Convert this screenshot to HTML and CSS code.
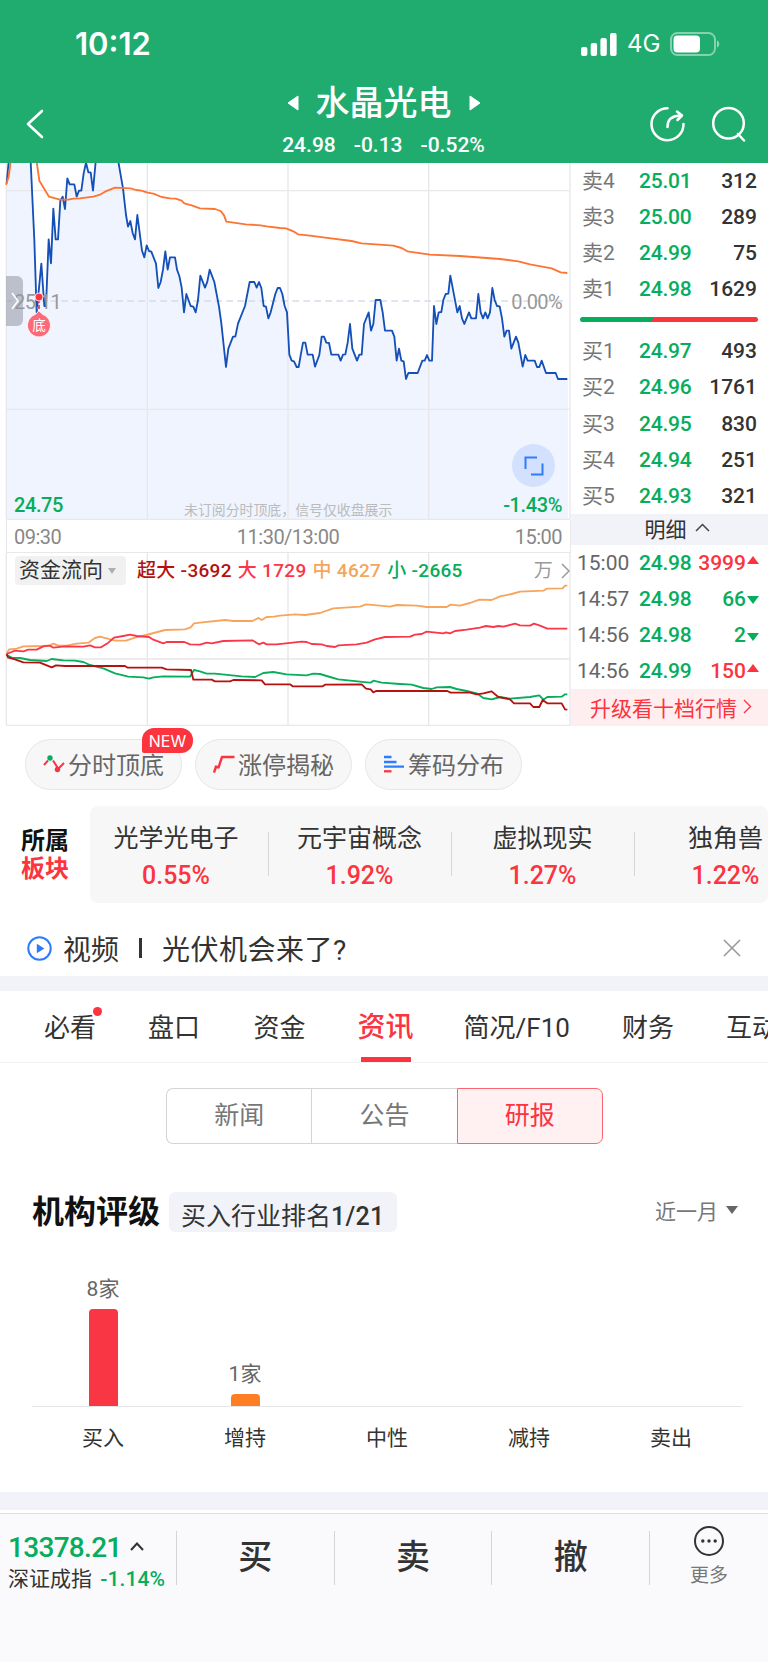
FILE: index.html
```html
<!DOCTYPE html>
<html lang="zh-CN">
<head>
    <meta charset="UTF-8">
    <meta name="viewport" content="width=device-width, initial-scale=1.0">
    <title>水晶光电</title>
    <link rel="stylesheet" href="styles.css">
</head>
<body>
    <header class="header">
        <div class="status">
            <span class="clock">10:12</span>
            <div class="status-right">
                <svg width="37" height="23" viewBox="0 0 37 23" fill="#fff">
                    <rect x="0" y="14" width="6.4" height="9" rx="2"/>
                    <rect x="9.7" y="10" width="6.4" height="13" rx="2"/>
                    <rect x="19.4" y="5" width="6.4" height="18" rx="2"/>
                    <rect x="29" y="0" width="6.6" height="23" rx="2"/>
                </svg>
                <span class="network">4G</span>
                <svg width="50" height="24" viewBox="0 0 50 24">
                    <rect x="1" y="1" width="44" height="22" rx="6.5" fill="none" stroke="#fff" stroke-opacity=".45" stroke-width="2"/>
                    <rect x="3.5" y="3.5" width="26.5" height="17" rx="4" fill="#fff"/>
                    <path d="M47 8.5c3 1.2 3 5.800 0 7z" fill="#fff" fill-opacity=".5"/>
                </svg>
            </div>
        </div>
        <div class="nav">
            <svg class="back" width="18" height="30" viewBox="0 0 18 30" fill="none" stroke="#fff" stroke-width="2.6" stroke-linecap="round" stroke-linejoin="round">
                <path d="M16 2L2 15l14 13"/>
            </svg>
            <div class="stock">
                <div class="stock-name">
                    <svg width="12" height="16" viewBox="0 0 12 16" fill="#fff"><path d="M11 1v14L1 8z" stroke="#fff" stroke-linejoin="round"/></svg>
                    <h1>水晶光电</h1>
                    <svg width="12" height="16" viewBox="0 0 12 16" fill="#fff"><path d="M1 1v14l10-7z" stroke="#fff" stroke-linejoin="round"/></svg>
                </div>
                <div class="stock-price"><span>24.98</span><span>-0.13</span><span>-0.52%</span></div>
            </div>
            <div class="nav-icons">
                <svg width="36" height="36" viewBox="0 0 36 36" fill="none" stroke="#fff" stroke-width="2.5" stroke-linecap="round" stroke-linejoin="round">
                    <path d="M17.500 2.200A16 16 0 1 0 33.500 18"/>
                    <path d="M17.500 21c0-7 4-11 12-11.500"/>
                    <path d="M27 5.500l5 4-4.500 4.500"/>
                </svg>
                <svg width="36" height="36" viewBox="0 0 36 36" fill="none" stroke="#fff" stroke-width="2.5" stroke-linecap="round">
                    <circle cx="17.5" cy="17.3" r="15.3"/>
                    <path d="M27 28l6 6.500"/>
                </svg>
            </div>
        </div>
    </header>

    <section class="quote">
        <div class="charts">
            <div class="price-chart">
                <svg width="571" height="357" viewBox="0 0 1713 1071">
                    <g transform="translate(0 -9)" fill="none" stroke-linejoin="round">
                        <path fill="#eff4fe" d="M20 1078V62L26 5H92L103 240 110 457 124 311 133 438 138 438 146 238 153 310 160 146 167 238 174 238 181 122 188 110 195 147 202 55 209 73 223 73 230 110 237 92 244 92 251 40 258 8 265 37 272 37 279 92 287 5 355 5 369 85 378 165 384 200 391 183 398 219 405 238 412 165 426 272 433 292 440 256 447 273 454 275 468 311 475 384 482 366 489 329 496 274 503 329 510 292 525 292 531 329 538 348 545 383 552 457 559 402 572 438 580 440 587 457 594 420 601 347 615 383 622 365 629 329 643 366 657 440 664 490 678 621 685 566 699 530 706 530 714 491 735 438 749 366 763 366 770 383 777 366 784 384 791 438 798 440 805 475 812 457 826 402 833 384 840 384 847 402 854 438 861 457 868 584 875 602 882 604 890 621 896 621 902 586 909 548 916 548 923 584 938 584 945 620 958 585 965 530 972 530 979 548 987 549 994 584 1015 584 1022 602 1029 584 1036 583 1043 548 1050 492 1057 566 1071 602 1078 584 1085 584 1092 492 1106 457 1113 512 1120 492 1127 420 1141 420 1148 457 1155 512 1176 512 1183 530 1190 602 1197 566 1204 602 1211 604 1218 657 1225 639 1253 639 1267 602 1274 602 1281 585 1288 602 1296 602 1302 438 1309 492 1316 457 1324 456 1330 420 1337 402 1345 401 1351 347 1372 457 1379 438 1386 475 1393 492 1407 457 1414 475 1428 475 1435 402 1442 457 1449 475 1456 457 1463 475 1470 457 1477 384 1484 420 1491 438 1499 439 1506 475 1513 530 1520 512 1527 512 1534 566 1548 530 1555 548 1568 620 1576 585 1583 602 1604 602 1611 621 1618 621 1625 602 1638 639 1667 639 1674 657 1704 657V1078z"/>
                        <path stroke="#e8e8ea" stroke-width="4" d="M19 0V1078M442 0V1078M864 0V1078M1286 0V1078M1710 0V1078M19 92H1710M19 748H1710M19 1078H1710"/>
                        <path stroke="#d3dde8" stroke-width="5" stroke-dasharray="20 13" d="M19 423H1702"/>
                        <path stroke="#1450b8" stroke-width="5.5" d="M20 70L26 5M92 5L103 240 110 457 124 311 133 438 138 438 146 238 153 310 160 146 167 238 174 238 181 122 188 110 195 147 202 55 209 73 223 73 230 110 237 92 244 92 251 40 258 8 265 37 272 37 279 92 287 5M355 5L369 85 378 165 384 200 391 183 398 219 405 238 412 165 426 272 433 292 440 256 447 273 454 275 468 311 475 384 482 366 489 329 496 274 503 329 510 292 525 292 531 329 538 348 545 383 552 457 559 402 572 438 580 440 587 457 594 420 601 347 615 383 622 365 629 329 643 366 657 440 664 490 678 621 685 566 699 530 706 530 714 491 735 438 749 366 763 366 770 383 777 366 784 384 791 438 798 440 805 475 812 457 826 402 833 384 840 384 847 402 854 438 861 457 868 584 875 602 882 604 890 621 896 621 902 586 909 548 916 548 923 584 938 584 945 620 958 585 965 530 972 530 979 548 987 549 994 584 1015 584 1022 602 1029 584 1036 583 1043 548 1050 492 1057 566 1071 602 1078 584 1085 584 1092 492 1106 457 1113 512 1120 492 1127 420 1141 420 1148 457 1155 512 1176 512 1183 530 1190 602 1197 566 1204 602 1211 604 1218 657 1225 639 1253 639 1267 602 1274 602 1281 585 1288 602 1296 602 1302 438 1309 492 1316 457 1324 456 1330 420 1337 402 1345 401 1351 347 1372 457 1379 438 1386 475 1393 492 1407 457 1414 475 1428 475 1435 402 1442 457 1449 475 1456 457 1463 475 1470 457 1477 384 1484 420 1491 438 1499 439 1506 475 1513 530 1520 512 1527 512 1534 566 1548 530 1555 548 1568 620 1576 585 1583 602 1604 602 1611 621 1618 621 1625 602 1638 639 1667 639 1674 657 1702 657"/>
                        <path stroke="#fd7433" stroke-width="5.5" d="M18 74L26 50 32 5M110 5L118 62 147 110 180 119 205 119 220 116 240 115 280 110 300 104 315 95 345 83 392 85 408 90 424 92 443 98 460 101 485 111 510 115 527 116 545 122 553 130 575 136 600 145 645 147 662 153 672 166 679 185 737 193 782 196 800 199 840 204 858 205 880 214 894 223 930 227 970 232 1055 243 1085 250 1180 257 1205 264 1222 274 1290 284 1380 288 1500 297 1555 304 1590 313 1655 325 1682 337 1702 339"/>
                    </g>
                </svg>
                <span class="mark mark-mid-left">25.11</span>
                <span class="mark mark-mid-right">0.00%</span>
                <span class="mark mark-low-left">24.75</span>
                <span class="mark mark-low-right">-1.43%</span>
                <span class="mark-note">未订阅分时顶底，信号仅收盘展示</span>
                <div class="handle">
                    <svg width="8" height="18" viewBox="0 0 8 18" fill="none" stroke="#fff" stroke-width="1.6"><path d="M1 1l6 8-6 8"/></svg>
                </div>
                <svg class="signal" width="26" height="46" viewBox="0 0 26 46">
                    <path d="M13 8v14" stroke="#d9314c" stroke-width="1.5" stroke-dasharray="4 2"/>
                    <circle cx="13" cy="6" r="4" fill="#fb3440" stroke="#fff" stroke-width=".8"/>
                    <path d="M13 20l4 3.600A11.500 11.500 0 1 1 9 23.600z" fill="#fb6a78" stroke="#fff" stroke-width=".8"/>
                    <text x="13" y="39" text-anchor="middle" font-size="13.5" fill="#fff">底</text>
                </svg>
                <div class="expand">
                    <svg width="20" height="20" viewBox="0 0 20 20" fill="none" stroke="#2f7dfb" stroke-width="2"><path d="M1.500 13V1.500H13M18.500 7.500V18.500H7"/></svg>
                </div>
            </div>
            <div class="times"><span>09:30</span><span>11:30/13:00</span><span>15:00</span></div>
            <div class="flow-chart">
                <svg width="571" height="173" viewBox="0 0 1713 519">
                    <g transform="translate(0 -159)" fill="none" stroke-linejoin="round">
                        <path stroke="#e8e8ea" stroke-width="4" d="M19 150V677M442 150V677M864 150V677M1286 150V677M1710 150V677M19 477H1710M19 676H1710"/>
                        <path stroke="#f6a55c" stroke-width="5.5" d="M20 460L28 448 50 446 70 439 130 438 150 436 160 431 175 437 200 437 230 431 265 428 285 414 300 410 345 422 378 422 405 413 450 402 495 390 555 388 572 382 582 370 600 368 675 360 700 363 757 363 775 354 785 360 800 351 822 350 840 347 885 343 915 345 960 339 1000 325 1080 320 1098 313 1140 317 1170 320 1190 315 1250 317 1280 321 1340 321 1352 314 1380 317 1410 309 1438 299 1475 300 1500 289 1535 282 1560 275 1630 272 1640 266 1688 265 1695 257 1702 257"/>
                        <path stroke="#fb3648" stroke-width="5.5" d="M20 462L45 452 70 454 85 449 110 449 130 439 150 437 160 443 195 439 250 440 270 436 285 442 303 442 325 428 342 413 370 408 390 404 410 408 447 411 460 419 490 430 500 426 553 426 570 433 600 434 620 428 635 430 670 423 757 421 777 433 790 428 800 433 830 433 905 425 920 426 935 432 965 433 980 438 1005 441 1015 436 1070 433 1100 428 1125 418 1155 411 1230 410 1245 404 1265 402 1280 395 1330 400 1338 397 1350 400 1365 393 1400 389 1440 383 1458 378 1480 381 1495 378 1510 380 1545 371 1560 376 1590 377 1602 371 1620 377 1642 386 1702 386"/>
                        <path stroke="#06ad5c" stroke-width="5.5" d="M20 465L35 473 60 474 90 480 140 483 155 477 190 481 225 482 250 486 270 495 310 505 345 520 385 530 430 532 447 536 460 532 490 529 570 530 582 510 600 514 620 521 645 521 725 529 765 531 790 519 820 516 860 523 920 526 940 521 960 522 990 531 1015 538 1080 545 1100 547 1112 548 1120 542 1145 548 1200 552 1235 554 1270 564 1295 567 1310 562 1350 561 1370 567 1400 573 1430 580 1450 594 1475 598 1500 591 1530 596 1590 591 1618 586 1630 599 1642 591 1685 590 1695 583 1702 583"/>
                        <path stroke="#b3120f" stroke-width="5.5" d="M20 462L24 472 45 478 70 487 120 488 155 502 168 496 195 498 375 498 383 503 485 503 500 508 573 510 580 539 635 539 645 544 690 544 700 540 785 541 795 553 870 553 878 559 968 559 975 554 1085 553 1098 566 1112 568 1120 577 1128 573 1342 573 1352 578 1410 578 1430 583 1450 580 1475 574 1495 591 1530 598 1542 610 1590 610 1600 621 1618 621 1628 600 1642 610 1685 610 1695 628 1702 629"/>
                    </g>
                </svg>
                <div class="flow-legend">
                    <span class="flow-select">资金流向 <i></i></span>
                    <span class="xl">超大 -3692</span>
                    <span class="lg">大 1729</span>
                    <span class="md">中 4627</span>
                    <span class="sm">小 -2665</span>
                    <span class="unit">万<svg width="9" height="16" viewBox="0 0 9 16" fill="none" stroke="#999" stroke-width="1.5"><path d="M1 1l7 7-7 7"/></svg></span>
                </div>
            </div>
        </div>

        <div class="book">
            <div class="row"><span>卖4</span><b>25.01</b><em>312</em></div>
            <div class="row"><span>卖3</span><b>25.00</b><em>289</em></div>
            <div class="row"><span>卖2</span><b>24.99</b><em>75</em></div>
            <div class="row"><span>卖1</span><b>24.98</b><em>1629</em></div>
            <div class="ratio"></div>
            <div class="row"><span>买1</span><b>24.97</b><em>493</em></div>
            <div class="row"><span>买2</span><b>24.96</b><em>1761</em></div>
            <div class="row"><span>买3</span><b>24.95</b><em>830</em></div>
            <div class="row"><span>买4</span><b>24.94</b><em>251</em></div>
            <div class="row"><span>买5</span><b>24.93</b><em>321</em></div>
            <div class="book-title">明细<svg width="15" height="9" viewBox="0 0 15 9" fill="none" stroke="#444" stroke-width="1.5"><path d="M1 8l6.500-6.500L14 8"/></svg></div>
            <div class="row trade"><span>15:00</span><b>24.98</b><em class="up">3999</em></div>
            <div class="row trade"><span>14:57</span><b>24.98</b><em class="down">66</em></div>
            <div class="row trade"><span>14:56</span><b>24.98</b><em class="down">2</em></div>
            <div class="row trade"><span>14:56</span><b>24.99</b><em class="up">150</em></div>
            <div class="upgrade">升级看十档行情<svg width="9" height="15" viewBox="0 0 9 15" fill="none" stroke="#fb3440" stroke-width="1.4"><path d="M1 1l6.500 6.500L1 14"/></svg></div>
        </div>
    </section>

    <section class="pills">
        <div class="pill">
            <svg width="22" height="18" viewBox="0 0 22 18" fill="none" stroke="#fb3440" stroke-width="2">
                <path d="M1 10l4-4.500M10 5.500l4.500 7M16 13l5-5"/>
                <circle cx="7" cy="3" r="2.7" fill="#06ad5c" stroke="none"/>
                <circle cx="14.5" cy="14.5" r="2.7" fill="#fb3440" stroke="none"/>
            </svg>
            分时顶底
            <span class="new">NEW</span>
        </div>
        <div class="pill">
            <svg width="22" height="18" viewBox="0 0 22 18" fill="none" stroke="#fb3440" stroke-width="2.4" stroke-linejoin="round"><path d="M1 17.500l2-6 2.500 1L9 2h12.500"/></svg>
            涨停揭秘
        </div>
        <div class="pill">
            <svg width="22" height="18" viewBox="0 0 22 18" fill="none" stroke="#2f7dfb" stroke-width="2.3"><path d="M1 2h7.500M1 7h12.500M1 11.700h20"/><path stroke="#fb3440" d="M1 16.300h7.500"/></svg>
            筹码分布
        </div>
    </section>

    <section class="sectors">
        <div class="sectors-title">所属<span>板块</span></div>
        <div class="sectors-list">
            <div class="sector">光学光电子<b>0.55%</b></div>
            <div class="sector">元宇宙概念<b>1.92%</b></div>
            <div class="sector">虚拟现实<b>1.27%</b></div>
            <div class="sector">独角兽<b>1.22%</b></div>
        </div>
    </section>

    <section class="video">
        <svg width="25" height="25" viewBox="0 0 25 25"><circle cx="12.5" cy="12.5" r="11.2" fill="none" stroke="#2b7bff" stroke-width="2"/><path d="M9.800 7.800v9.400l7.600-4.700z" fill="#2b7bff"/></svg>
        <span class="video-tag">视频</span>
        <span class="bar"></span>
        <span class="video-title">光伏机会来了?</span>
        <svg class="close" width="18" height="18" viewBox="0 0 18 18" stroke="#999" stroke-width="1.6"><path d="M1 1l16 16M17 1L1 17"/></svg>
    </section>

    <div class="gap"></div>

    <nav class="tabs">
        <span class="dot">必看</span>
        <span>盘口</span>
        <span>资金</span>
        <span class="active">资讯</span>
        <span>简况/F10</span>
        <span>财务</span>
        <span>互动</span>
    </nav>

    <div class="segment">
        <span>新闻</span>
        <span>公告</span>
        <span class="on">研报</span>
    </div>

    <section class="rating">
        <div class="rating-head">
            <h2>机构评级</h2>
            <span class="rank">买入行业排名<b>1/21</b></span>
            <span class="period">近一月 <i></i></span>
        </div>
        <div class="bars">
            <div class="col">8家<i class="buy"></i></div>
            <div class="col">1家<i class="add"></i></div>
            <div class="col"></div>
            <div class="col"></div>
            <div class="col"></div>
        </div>
        <div class="bar-names">
            <span>买入</span><span>增持</span><span>中性</span><span>减持</span><span>卖出</span>
        </div>
    </section>

    <div class="gap gap-bottom"></div>

    <footer class="footer">
        <div class="index">
            <div class="index-value">13378.21<svg width="14" height="9" viewBox="0 0 14 9" fill="none" stroke="#333" stroke-width="2"><path d="M1 8l6-6.500L13 8"/></svg></div>
            <div class="index-name">深证成指 <b>-1.14%</b></div>
        </div>
        <div class="action">买</div>
        <div class="action">卖</div>
        <div class="action">撤</div>
        <div class="more">
            <svg width="32" height="32" viewBox="0 0 32 32"><circle cx="16" cy="16" r="14" fill="none" stroke="#333" stroke-width="2"/><g fill="#333"><circle cx="9.8" cy="16" r="1.7"/><circle cx="16" cy="16" r="1.7"/><circle cx="22.2" cy="16" r="1.7"/></g></svg>
            更多
        </div>
    </footer>
</body>
</html>
```
FILE: styles.css
```css
* {
    box-sizing: border-box;
}

body {
    margin: 0;
    width: 768px;
    height: 1662px;
    overflow: hidden;
    background: #fff;
    color: #333;
    font-family: Roboto, "Noto Sans CJK SC", sans-serif;
}

h1, h2 {
    margin: 0;
}

svg {
    display: block;
    flex: none;
}

b, em {
    font-weight: 500;
    font-style: normal;
}

/* Header */
.header {
    height: 163px;
    background: #21ac6f;
    color: #fff;
}

.status {
    display: flex;
    justify-content: space-between;
    align-items: center;
    height: 88px;
    padding: 0 48px 0 75px;
}

.clock {
    font: 600 31px/40px Inter, sans-serif;
}

.status-right {
    display: flex;
    align-items: center;
}

.network {
    width: 34px;
    margin: 0 9px;
    font: 400 24px/30px Inter, sans-serif;
}

.nav {
    display: flex;
    justify-content: space-between;
    height: 75px;
    padding: 0 21px 0 26px;
}

.back {
    margin-top: 21px;
}

.stock {
    width: 260px;
    margin-left: 73px;
    text-align: center;
}

.stock-name {
    display: flex;
    justify-content: center;
    align-items: center;
    gap: 17px;
    height: 30px;
}

.stock-name h1 {
    font-size: 34px;
    font-weight: 500;
    line-height: 34px;
}

.stock-price {
    display: flex;
    justify-content: center;
    gap: 18px;
    margin-top: 13px;
    font-size: 21px;
    font-weight: 500;
    line-height: 28px;
}

.nav-icons {
    display: flex;
    gap: 25px;
    margin-top: 18px;
}

/* Charts and order book */
.quote {
    display: flex;
    height: 563px;
}

.charts {
    width: 571px;
}

.price-chart {
    position: relative;
    height: 357px;
}

.mark {
    position: absolute;
    font-size: 20px;
    line-height: 24px;
    letter-spacing: -0.6px;
    color: #999;
}

.mark-mid-left {
    left: 14px;
    top: 127px;
}

.mark-mid-right {
    right: 9px;
    top: 127px;
}

.mark-low-left,
.mark-low-right {
    top: 330px;
    font-weight: 500;
    letter-spacing: -0.4px;
    color: #06ad5c;
}

.mark-low-left {
    left: 14px;
}

.mark-low-right {
    right: 9px;
}

.mark-note {
    position: absolute;
    left: 184px;
    top: 337px;
    font-size: 13.9px;
    line-height: 20px;
    color: #bbb;
    white-space: nowrap;
}

.handle {
    position: absolute;
    left: 6px;
    top: 113px;
    display: flex;
    justify-content: center;
    align-items: center;
    width: 17px;
    height: 50px;
    border-radius: 0 6px 6px 0;
    background: rgba(145, 150, 162, 0.55);
}

.signal {
    position: absolute;
    left: 26px;
    top: 128px;
}

.expand {
    position: absolute;
    left: 512px;
    top: 281px;
    display: flex;
    justify-content: center;
    align-items: center;
    width: 43px;
    height: 43px;
    border-radius: 50%;
    background: #d3e1fe;
}

.times {
    display: flex;
    justify-content: space-between;
    height: 33px;
    margin-left: 6px;
    padding: 0 8px 0 7px;
    border: 1px solid #e8e8ea;
    border-top: 0;
    font-size: 20px;
    line-height: 34px;
    letter-spacing: -0.5px;
    color: #888;
}

.flow-chart {
    position: relative;
    height: 173px;
}

.flow-legend {
    position: absolute;
    left: 15px;
    right: 1px;
    top: 3px;
    display: flex;
    align-items: center;
    gap: 6px;
    height: 29px;
    font-size: 19px;
    font-weight: 500;
    line-height: 29px;
    letter-spacing: 0.3px;
    white-space: nowrap;
}

.flow-select {
    display: flex;
    align-items: center;
    gap: 5px;
    width: 111px;
    height: 29px;
    margin-right: 5px;
    padding-left: 4px;
    border-radius: 4px;
    background: #f1f1f1;
    font-size: 21px;
    font-weight: 400;
    letter-spacing: 0;
}

.flow-select i,
.period i {
    border: 4px solid transparent;
    border-top: 6px solid #b0b0b0;
    border-bottom: 0;
}

.xl { color: #b3120f; }
.lg { color: #fb3648; }
.md { color: #f6a55c; }
.sm { color: #06ad5c; }

.unit {
    display: flex;
    align-items: center;
    gap: 8px;
    margin-left: auto;
    font-weight: 400;
    color: #999;
}

.book {
    width: 197px;
    font-size: 21px;
}

.row {
    display: grid;
    grid-template-columns: 57px 56px 1fr;
    height: 36.1px;
    padding: 0 11px;
    line-height: 36px;
    color: #777;
}

.row b {
    color: #06ad5c;
    letter-spacing: -0.2px;
}

.row em {
    text-align: right;
    color: #333;
}

.ratio {
    height: 5px;
    margin: 10px 10px 11px 9px;
    border-radius: 3px;
    background: linear-gradient(125deg, #06ad5c 41%, #fb3440 41%);
}

.book-title {
    display: flex;
    justify-content: center;
    align-items: center;
    gap: 8px;
    height: 31px;
    padding: 0 0 3px 15px;
    background: #f2f3f8;
}

.trade {
    grid-template-columns: 62px 56px 1fr;
    padding-left: 6px;
    color: #666;
}

.trade em {
    display: flex;
    justify-content: flex-end;
    align-items: center;
    gap: 1px;
    margin-right: -2px;
}

.trade em::after {
    content: "";
    border: 6.5px solid transparent;
}

.trade .up {
    color: #fb3440;
}

.trade .down {
    color: #06ad5c;
}

.trade .up::after {
    margin-bottom: 6px;
    border-top: 0;
    border-bottom: 8px solid #fb3440;
}

.trade .down::after {
    margin-top: 3px;
    border-bottom: 0;
    border-top: 8px solid #06ad5c;
}

.upgrade {
    display: flex;
    justify-content: center;
    align-items: center;
    gap: 6px;
    height: 37px;
    padding: 0 0 2px 3px;
    background: #ffeeef;
    color: #fb3440;
}

/* Feature pills */
.pills {
    display: flex;
    gap: 13px;
    padding: 13px 25px 0;
}

.pill {
    position: relative;
    display: flex;
    justify-content: center;
    align-items: center;
    gap: 3px;
    width: 157px;
    height: 51px;
    padding-bottom: 2px;
    border: 1px solid #e6e6e6;
    border-radius: 26px;
    background: #f7f7f7;
    color: #666;
    font-size: 24px;
}

.new {
    position: absolute;
    left: 116px;
    top: -12px;
    width: 51px;
    height: 25px;
    border-radius: 12px 12px 12px 2px;
    background: #fb3440;
    color: #fff;
    font: 400 16px/26px Inter, sans-serif;
    text-align: center;
}

/* Sectors */
.sectors {
    display: flex;
    align-items: center;
    height: 97px;
    margin-top: 16px;
}

.sectors-title {
    flex: none;
    width: 90px;
    padding-left: 21px;
    color: #111;
    font-size: 24px;
    font-weight: 700;
    line-height: 28px;
}

.sectors-title span {
    display: block;
    color: #fb3440;
}

.sectors-list {
    display: flex;
    width: 678px;
    height: 97px;
    padding-top: 14px;
    border-radius: 8px;
    background: #f7f7f7;
    overflow: hidden;
}

.sector {
    position: relative;
    flex: none;
    width: 183px;
    font-size: 25px;
    line-height: 37px;
    text-align: center;
}

.sector:first-child {
    width: 178px;
    padding-right: 6px;
}

.sector + .sector::before {
    content: "";
    position: absolute;
    left: 0;
    top: 12px;
    height: 44px;
    border-left: 1px solid #d6d6d6;
}

.sector b {
    display: block;
    color: #fb3440;
}

/* Video row */
.video {
    display: flex;
    align-items: center;
    height: 73px;
    padding: 17px 27px 0;
    font-size: 28px;
}

.video-tag {
    margin-left: 11px;
}

.video-title {
    letter-spacing: 0.5px;
}

.bar {
    width: 3px;
    height: 20px;
    margin: 0 20px;
    background: #333;
}

.close {
    margin-left: auto;
}

.gap {
    height: 15px;
    background: #f2f3f8;
}

/* Tabs */
.tabs {
    display: flex;
    gap: 52px;
    height: 72px;
    padding-left: 44px;
    border-bottom: 1px solid #f2f2f4;
    font-size: 26px;
    line-height: 74px;
    white-space: nowrap;
}

.tabs span {
    position: relative;
    flex: none;
    height: 72px;
}

.tabs span:nth-child(3) {
    margin-left: 1.5px;
}

.tabs span:nth-child(5) {
    margin-left: -2px;
}

.tabs .active {
    font-size: 28px;
    font-weight: 500;
    color: #fb3440;
}

.tabs .active::after {
    content: "";
    position: absolute;
    left: 3px;
    bottom: 1px;
    width: 50px;
    height: 5px;
    background: #fb3440;
}

.tabs .dot::after {
    content: "";
    position: absolute;
    right: -6px;
    top: 16px;
    width: 9px;
    height: 9px;
    border-radius: 50%;
    background: #fb3440;
}

.segment {
    display: flex;
    width: 437px;
    height: 56px;
    margin: 25px 0 0 166px;
    font-size: 25px;
    line-height: 54px;
    text-align: center;
    color: #777;
}

.segment span {
    flex: 1;
    border: 1px solid #d4d4d6;
    border-right: 0;
}

.segment span:first-child {
    border-radius: 7px 0 0 7px;
}

.segment .on {
    border: 1px solid #fb6670;
    border-radius: 0 7px 7px 0;
    background: #fff0f2;
    color: #fb3440;
}

/* Rating */
.rating {
    height: 348px;
    padding: 48px 25px 0 32px;
}

.rating-head {
    display: flex;
    align-items: center;
    height: 40px;
}

.rating-head h2 {
    font-size: 32px;
    font-weight: 700;
    line-height: 40px;
    color: #111;
}

.rank {
    height: 40px;
    margin-left: 9px;
    padding: 0 12px;
    border-radius: 6px;
    background: #f2f3f8;
    font-size: 25px;
    line-height: 49px;
}

.rank b {
    letter-spacing: 0.3px;
}

.period {
    display: flex;
    align-items: center;
    gap: 8px;
    margin-left: auto;
    padding: 0 5px 4px 0;
    font-size: 21px;
    color: #777;
}

.period i {
    border-width: 8px 6px 0;
    border-top-color: #666;
}

.bars {
    display: flex;
    align-items: flex-end;
    width: 710px;
    height: 175px;
    border-bottom: 1px solid #e6e6e8;
}

.col {
    display: flex;
    flex: 1;
    flex-direction: column;
    align-items: center;
    gap: 5px;
    font-size: 21px;
    line-height: 30px;
    color: #666;
}

.col i {
    width: 29px;
    border-radius: 4px 4px 0 0;
}

.buy {
    height: 97px;
    background: #f93644;
}

.add {
    height: 12px;
    background: #fd7e23;
}

.bar-names {
    display: flex;
    width: 710px;
    padding-top: 15px;
    font-size: 21px;
    line-height: 32px;
}

.bar-names span {
    flex: 1;
    text-align: center;
}

.gap-bottom {
    height: 18px;
    margin-bottom: 3px;
}

/* Bottom bar */
.footer {
    display: flex;
    height: 150px;
    padding-top: 17px;
    border-top: 1px solid #dedee2;
    background: #fafafc;
}

.index {
    width: 176px;
    padding-left: 8px;
    white-space: nowrap;
}

.index-value {
    display: flex;
    align-items: center;
    gap: 8px;
    height: 32px;
    font-size: 28px;
    font-weight: 500;
    letter-spacing: -0.7px;
    color: #06ad5c;
}

.index-value svg {
    margin-bottom: 2px;
}

.index-name {
    font-size: 21px;
    line-height: 33px;
}

.index-name b {
    margin-left: 3px;
    color: #06ad5c;
    letter-spacing: 0.1px;
}

.action {
    width: 157.7px;
    height: 54px;
    border-left: 1px solid #d4d4d8;
    font-size: 34px;
    font-weight: 500;
    line-height: 53px;
    text-align: center;
}

.more {
    display: flex;
    flex: 1;
    flex-direction: column;
    align-items: center;
    height: 54px;
    border-left: 1px solid #d4d4d8;
    font-size: 19px;
    line-height: 30px;
    color: #777;
}

.more svg {
    margin-top: -6px;
    margin-bottom: 4px;
}
```
